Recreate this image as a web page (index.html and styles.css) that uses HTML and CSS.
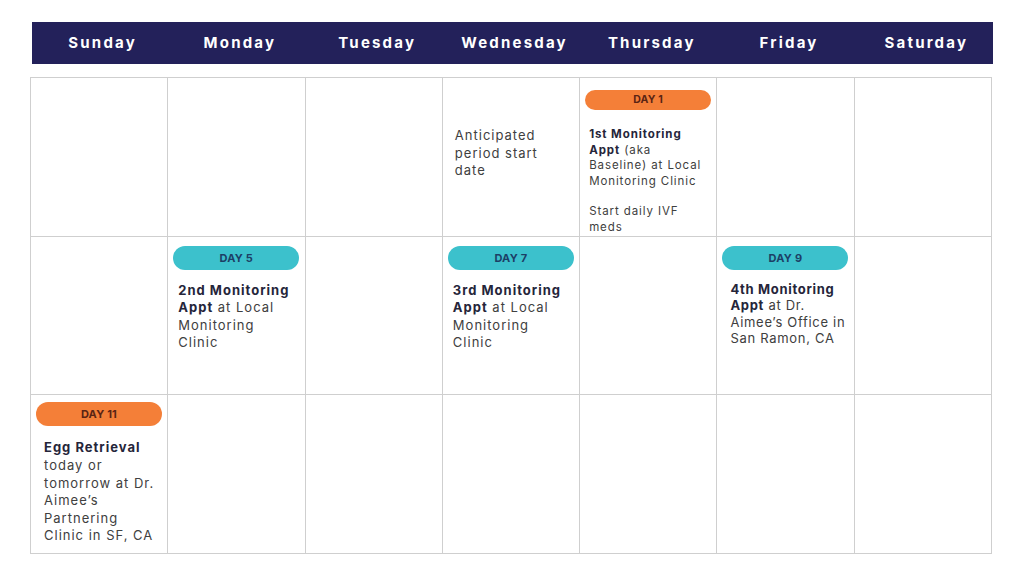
FILE: index.html
```html
<!DOCTYPE html>
<html>
<head>
<meta charset="utf-8">
<link rel="stylesheet" href="styles.css">
</head>
<body>
<div class="page">
  <div class="header">
    <div class="hd">Sunday</div>
    <div class="hd">Monday</div>
    <div class="hd">Tuesday</div>
    <div class="hd">Wednesday</div>
    <div class="hd">Thursday</div>
    <div class="hd">Friday</div>
    <div class="hd">Saturday</div>
  </div>
  <div class="grid">
    <div class="cell"></div>
    <div class="cell"></div>
    <div class="cell"></div>
    <div class="cell"><p class="txt txt-plain">Anticipated period start date</p></div>
    <div class="cell cell-r1">
      <div class="pill pill-orange pill-sm">DAY 1</div>
      <p class="txt txt-sm"><b>1st Monitoring</b> <b>Appt</b> (aka Baseline) at Local Monitoring Clinic</p>
      <p class="txt txt-sm txt-gap">Start daily IVF meds</p>
    </div>
    <div class="cell"></div>
    <div class="cell"></div>

    <div class="cell"></div>
    <div class="cell cell-r2">
      <div class="pill pill-teal">DAY 5</div>
      <p class="txt"><b>2nd Monitoring</b> <b>Appt</b> at Local Monitoring Clinic</p>
    </div>
    <div class="cell"></div>
    <div class="cell cell-r2">
      <div class="pill pill-teal">DAY 7</div>
      <p class="txt"><b>3rd Monitoring</b> <b>Appt</b> at Local Monitoring Clinic</p>
    </div>
    <div class="cell"></div>
    <div class="cell cell-r2">
      <div class="pill pill-teal">DAY 9</div>
      <p class="txt txt-mid"><b>4th Monitoring</b> <b>Appt</b> at Dr. Aimee’s Office in San Ramon, CA</p>
    </div>
    <div class="cell"></div>

    <div class="cell cell-r3">
      <div class="pill pill-orange">DAY 11</div>
      <p class="txt txt-wide"><b>Egg Retrieval</b> today or tomorrow at Dr. Aimee’s Partnering Clinic in SF, CA</p>
    </div>
    <div class="cell"></div>
    <div class="cell"></div>
    <div class="cell"></div>
    <div class="cell"></div>
    <div class="cell"></div>
    <div class="cell"></div>
  </div>
</div>
</body>
</html>
```

FILE: styles.css
```css
* { box-sizing: border-box; }
html, body { margin: 0; padding: 0; background: #fff; }
body { font-family: Inter, "DejaVu Sans", sans-serif; width: 1024px; height: 576px; overflow: hidden; }
.page { padding: 22px 0 0 30px; }
.header {
  margin-left: 2px;
  width: 961px;
  height: 42px;
  background: #23215a;
  display: grid;
  grid-template-columns: repeat(7, 1fr);
  align-items: center;
}
.hd {
  color: #fff;
  font-weight: 700;
  font-size: 15px;
  letter-spacing: 2.2px;
  text-align: center;
  padding-left: 4px;
  padding-bottom: 1px;
}
.grid {
  margin-top: 13px;
  width: 962px;
  display: grid;
  grid-template-columns: repeat(7, 1fr);
  grid-template-rows: repeat(3, 158.7px);
  border-top: 1.5px solid #cfcfcf;
  border-left: 1.5px solid #cfcfcf;
}
.cell {
  border-right: 1.5px solid #cfcfcf;
  border-bottom: 1.5px solid #cfcfcf;
  padding: 0 5px;
}
.cell-r1 { padding-top: 12px; }
.cell-r2 { padding-top: 9px; }
.cell-r3 { padding-top: 7px; }
.pill {
  height: 24px;
  border-radius: 12px;
  text-align: center;
  font-size: 11px;
  font-weight: 700;
  line-height: 24px;
  letter-spacing: 0.2px;
  width: 126px;
}
.pill-sm { height: 20px; line-height: 20px; border-radius: 10px; font-size: 10.5px; }
.pill-orange { background: #f47f38; color: #5a2414; }
.pill-teal { background: #3cc1cc; color: #1c3f66; }
.txt {
  margin: 12px 0 0 0;
  padding: 0 5px;
  font-size: 13px;
  line-height: 17.6px;
  letter-spacing: 1px;
  color: #404040;
}
.txt b { color: #25253a; font-weight: 700; }
.txt-plain { margin-top: 49px; padding-left: 7px; }
.txt-sm { font-size: 11.5px; line-height: 15.6px; letter-spacing: 0.9px; margin-top: 17px; padding-left: 4px; }
.txt-gap { margin-top: 15px; }
.txt-mid { line-height: 16.6px; letter-spacing: 0.7px; padding-left: 8px; padding-right: 0; margin-top: 11px; }
.txt-wide { padding-left: 8px; }
.cell-r3 .txt { margin-top: 13px; }
```
